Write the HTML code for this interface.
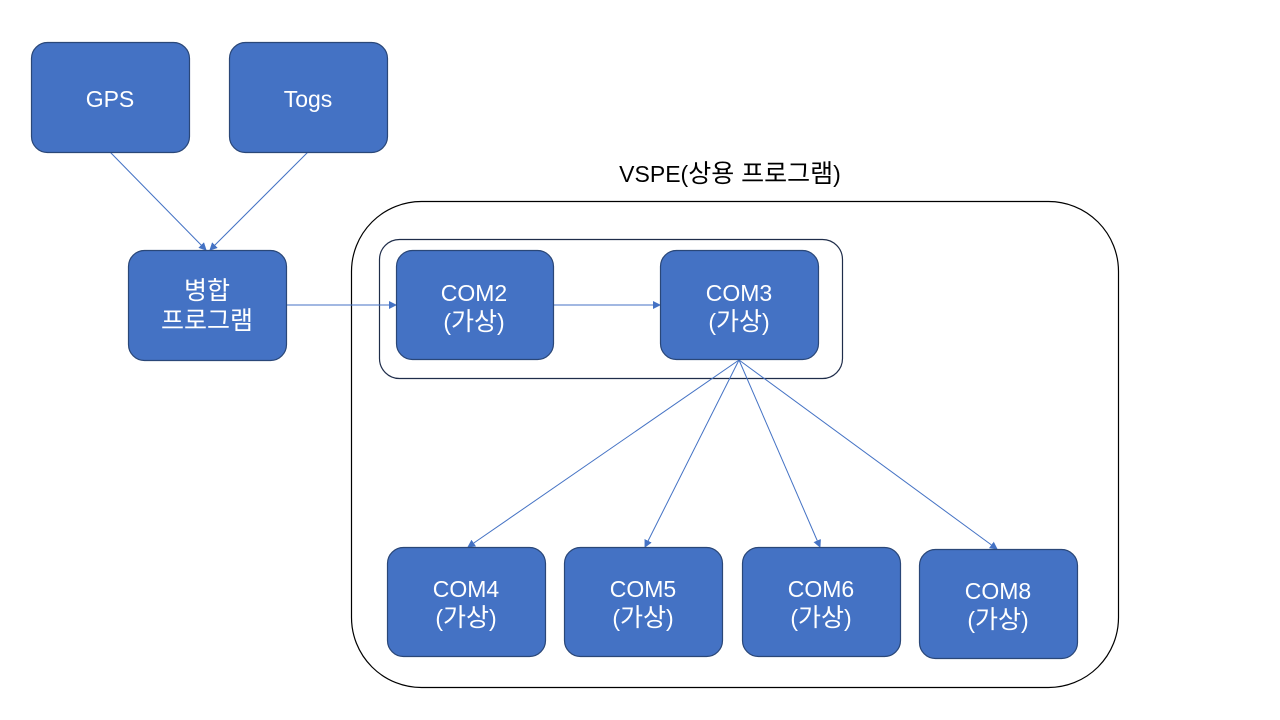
<!DOCTYPE html>
<html><head><meta charset="utf-8"><style>
html,body{margin:0;padding:0;background:#fff;width:1280px;height:720px;overflow:hidden}
text{font-family:"Liberation Sans","Noto Sans CJK KR",sans-serif;font-size:23px;fill:#fff;text-anchor:middle}
.k{font-size:25px}
</style></head><body>
<svg width="1280" height="720" viewBox="0 0 1280 720" xmlns="http://www.w3.org/2000/svg">
<defs><marker id="a" markerWidth="8" markerHeight="8" refX="7" refY="4" orient="auto" markerUnits="userSpaceOnUse"><path d="M0,0 L8,4 L0,8 z" fill="#4472C4"/></marker></defs>
<rect x="351.5" y="201.5" width="767" height="486" rx="70" fill="none" stroke="#000" stroke-width="1.2"/>
<rect x="379.5" y="239.5" width="463" height="139" rx="20" fill="none" stroke="#1f2d4a" stroke-width="1.2"/>
<text x="730" y="182" style="fill:#000">VSPE(<tspan class="k">상용 프로그램</tspan>)</text>
<g stroke="#4472C4" stroke-width="1" fill="none" marker-end="url(#a)">
<line x1="110" y1="152" x2="206" y2="250"/>
<line x1="308" y1="152" x2="210" y2="250"/>
<line x1="287" y1="305" x2="396" y2="305"/>
<line x1="553" y1="305" x2="660" y2="305"/>
<line x1="739" y1="360" x2="468" y2="547"/>
<line x1="739" y1="360" x2="645" y2="547"/>
<line x1="739" y1="360" x2="820" y2="547"/>
<line x1="739" y1="360" x2="997" y2="549"/>
</g>
<g fill="#4472C4" stroke="#2a4778" stroke-width="1.2">
<rect x="31.5" y="42.5" width="158" height="110" rx="16"/>
<rect x="229.5" y="42.5" width="158" height="110" rx="16"/>
<rect x="128.5" y="250.5" width="158" height="110" rx="16"/>
<rect x="396.5" y="250.5" width="157" height="109" rx="16"/>
<rect x="660.5" y="250.5" width="158" height="109" rx="16"/>
<rect x="387.5" y="547.5" width="158" height="109" rx="16"/>
<rect x="564.5" y="547.5" width="158" height="109" rx="16"/>
<rect x="742.5" y="547.5" width="158" height="109" rx="16"/>
<rect x="919.5" y="549.5" width="158" height="109" rx="16"/>
</g>
<text x="110" y="107">GPS</text>
<text x="308" y="107">Togs</text>
<text x="207" y="299" class="k">병합</text><text x="207" y="329" class="k">프로그램</text>
<text x="474" y="301">COM2</text><text x="474" y="330">(<tspan class="k">가상</tspan>)</text>
<text x="739" y="301">COM3</text><text x="739" y="330">(<tspan class="k">가상</tspan>)</text>
<text x="466" y="597">COM4</text><text x="466" y="626">(<tspan class="k">가상</tspan>)</text>
<text x="643" y="597">COM5</text><text x="643" y="626">(<tspan class="k">가상</tspan>)</text>
<text x="821" y="597">COM6</text><text x="821" y="626">(<tspan class="k">가상</tspan>)</text>
<text x="998" y="599">COM8</text><text x="998" y="628">(<tspan class="k">가상</tspan>)</text>
</svg>
</body></html>
